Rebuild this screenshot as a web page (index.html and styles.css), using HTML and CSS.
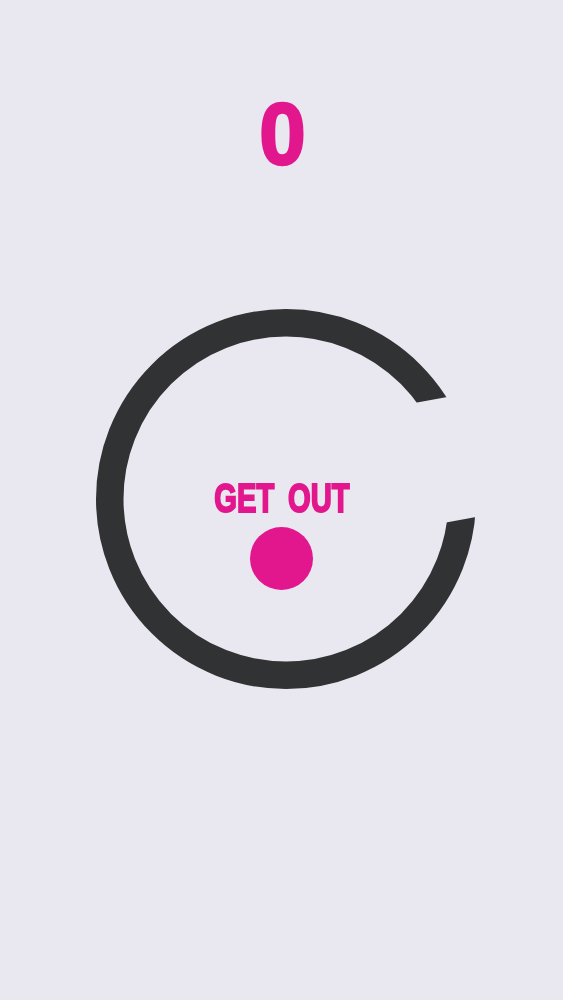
FILE: index.html
```html
<!DOCTYPE html>
<html>
<head>
<meta charset="utf-8">
<link rel="stylesheet" href="styles.css">
</head>
<body>
<main class="screen">
  <div class="score">0</div>
  <div class="stage">
    <svg class="ring" width="380" height="380" viewBox="0 0 380 380">
      <defs>
        <mask id="gap">
          <rect x="0" y="0" width="380" height="380" fill="#fff"/>
          <rect x="190" y="118.7" width="240" height="123.4" fill="#000" transform="rotate(-10.4 190 190)"/>
        </mask>
      </defs>
      <circle cx="190" cy="190" r="176.25" fill="none" stroke="#313234" stroke-width="27.5" mask="url(#gap)"/>
    </svg>
    <div class="center">
      <div class="title">GET OUT</div>
      <div class="ball"></div>
    </div>
  </div>
</main>
</body>
</html>
```
FILE: styles.css
```css
html, body {
  margin: 0;
  padding: 0;
  background: #e9e7ef;
}
.screen {
  width: 563px;
  height: 1000px;
  display: flex;
  flex-direction: column;
  align-items: center;
  font-family: "Liberation Sans", Arial, sans-serif;
}
.score {
  margin-top: 90px;
  font-size: 88px;
  line-height: 1;
  font-weight: bold;
  color: #e2178e;
  -webkit-text-stroke: 2.5px #e2178e;
  height: 88px;
  transform: translateX(1px) scaleX(0.95);
}
.stage {
  margin-top: 130.5px;
  width: 563px;
  display: grid;
}
.ring {
  grid-area: 1 / 1;
  justify-self: center;
  margin-left: 9px;
}
.center {
  grid-area: 1 / 1;
  display: flex;
  flex-direction: column;
  align-items: center;
  padding-top: 169.5px;
}
.title {
  font-family: "Liberation Sans", Arial, sans-serif;
  font-weight: bold;
  font-size: 40.5px;
  line-height: 1;
  color: #e2178e;
  word-spacing: 8px;
  white-space: nowrap;
  -webkit-text-stroke: 2px #e2178e;
  transform: scaleX(0.72);
}
.ball {
  margin-top: 8px;
  width: 63px;
  height: 63px;
  border-radius: 50%;
  background: #e2178e;
}
```
